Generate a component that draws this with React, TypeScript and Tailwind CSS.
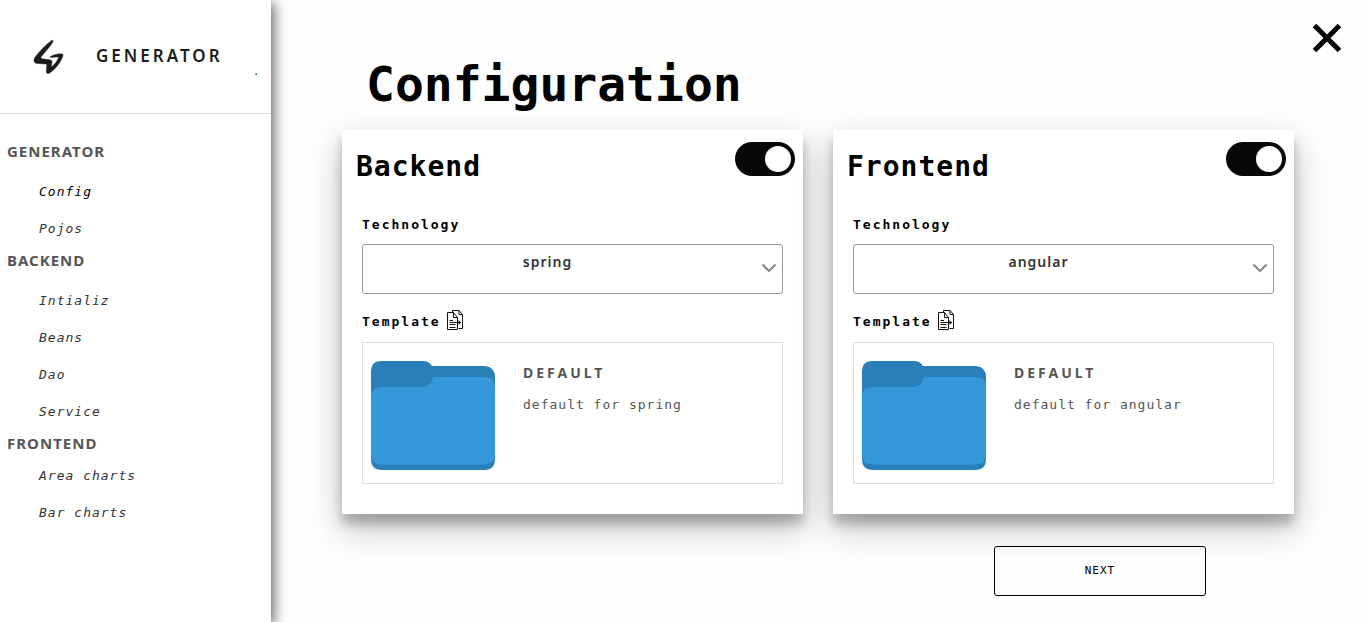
import { useState } from "react";

const navigation = [
  { title: "Generator", items: ["Config", "Pojos"], spaced: true },
  { title: "Backend", items: ["Intializ", "Beans", "Dao", "Service"], spaced: true },
  { title: "Frontend", items: ["Area charts", "Bar charts"], spaced: false },
];

function Logo() {
  return (
    <svg viewBox="0 0 32 36" className="h-9 w-8" fill="#1c1c1c" stroke="#1c1c1c" strokeWidth="0.4" aria-hidden="true">
      <path
        fillRule="evenodd"
        d="M19.6 2.4 C20.4 1.8 21.6 2.7 21 3.7 C17.5 9.5 12.7 14.2 9.5 18.5 C8.6 19.8 8.7 20.6 10.2 20.8 L17.6 21.7 C19.6 22 20.3 23 20 24.6 L19.2 29 C22.5 26.6 25.4 23 26.6 19.2 C24.7 18.8 22 19.2 19 19.6 C18.2 19.7 18 18.6 18.8 18.3 C22 16.7 26 15.6 29.5 15.8 C30.9 15.9 31.3 16.9 30.8 18.2 C28.7 24.6 23.4 31.2 17.8 34.9 C16 36.1 14.2 35.7 14.3 33.5 L14.7 27.5 C14.8 26.6 14.4 26.2 13.6 26.1 L4.9 25.5 C1.9 25.2 1.1 22.2 2.8 19.6 C7.3 13 13.4 7.2 19.6 2.4 Z"
      />
    </svg>
  );
}

function CopyIcon() {
  return (
    <svg viewBox="0 0 16 21" className="h-[21px] w-4" fill="none" stroke="#111" strokeWidth="1" aria-hidden="true">
      <path d="M5.5 2.5 V.5 H12 L15.5 4.5 V18.5 H11.5 M12 .5 V4.5 H15.5" />
      <path d="M.5 2.5 H6.5 L10.5 7.5 V19.5 H.5 Z" fill="#fff" />
      <path d="M6.5 2.5 V7.5 H10.5" />
      <path d="M2.5 10.5 H6 M2.5 12.5 H14 M2.5 14.5 H8.5 M2.5 17.5 H8.5" />
      <path d="M11.5 10 L14 12.5 L11.5 15 Z" fill="#111" stroke="none" />
    </svg>
  );
}

function Folder() {
  return (
    <svg viewBox="0 0 124 109" className="w-31 shrink-0" aria-hidden="true">
      <path
        fill="#2980b9"
        d="M10 0 H52 Q58 0 61 5 H114 Q124 6 124 16 V98 Q124 109 113 109 H11 Q0 109 0 98 V11 Q0 0 10 0 Z"
      />
      <path
        fill="#3498db"
        d="M62 16 H113 Q124 16 124 27 V93 Q124 103.5 113 103.5 H11 Q0 103.5 0 93 V36 Q0 26 11 26 H51 Q61 25 62 16 Z"
      />
    </svg>
  );
}

function Switch({ label }: { label: string }) {
  const [on, setOn] = useState(true);
  return (
    <label className="flex h-[34px] w-15 cursor-pointer items-center rounded-full bg-[#ccc] px-1 has-checked:justify-end has-checked:bg-[#080808]">
      <input
        type="checkbox"
        className="sr-only"
        aria-label={label}
        checked={on}
        onChange={(e) => setOn(e.target.checked)}
      />
      <span className="size-[26px] rounded-full bg-white" />
    </label>
  );
}

function ConfigCard({ title, options }: { title: string; options: string[] }) {
  const [technology, setTechnology] = useState(options[0]);
  const id = `${title}-technology`;
  return (
    <section className="bg-white px-5 pb-[30px] shadow-[0_14px_32px_rgba(0,0,0,0.25),0_10px_10px_rgba(0,0,0,0.22)]">
      <header className="-mx-5 flex items-start justify-between pt-3 pr-2 pl-[14px]">
        <h2 className="pt-[5px] text-[28px] leading-10 font-bold tracking-[1px]">{title}</h2>
        <Switch label={`Enable ${title}`} />
      </header>

      <label htmlFor={id} className="mt-7 block text-[13px] leading-5 font-bold tracking-[2px]">
        Technology
      </label>
      <div className="mt-[9px] grid items-center">
        <select
          id={id}
          value={technology}
          onChange={(e) => setTechnology(e.target.value)}
          className="col-start-1 row-start-1 h-[50px] w-full appearance-none rounded-[3px] border border-[#999] bg-white pr-[50px] pb-[14px] text-center font-['Noto_Sans',sans-serif] text-sm font-semibold tracking-[1px] text-[#333] [text-align-last:center]"
        >
          {options.map((option) => (
            <option key={option}>{option}</option>
          ))}
        </select>
        <svg
          viewBox="0 0 16 10"
          className="pointer-events-none col-start-1 row-start-1 mr-[6px] mb-[2px] h-[10px] w-4 justify-self-end"
          fill="none"
          stroke="#888"
          strokeWidth="2.2"
          aria-hidden="true"
        >
          <path d="M1.5 1.5 L8 8 L14.5 1.5" />
        </svg>
      </div>

      <div className="mt-4 flex h-[21px] items-center gap-[6px]">
        <h3 className="pt-[3px] text-[13px] leading-5 font-bold tracking-[2px]">Template</h3>
        <CopyIcon />
      </div>
      <article className="mt-[11px] flex gap-7 border border-[#ddd] pt-[18px] pr-4 pb-[13px] pl-2">
        <Folder />
        <div className="pt-[2px] text-[#555]">
          <h4 className="font-['Noto_Sans',sans-serif] text-sm leading-5 font-bold tracking-[3px] uppercase">
            Default
          </h4>
          <p className="mt-3 text-[13px] leading-5 tracking-[1px]">default for {technology}</p>
        </div>
      </article>
    </section>
  );
}

export default function App() {
  return (
    <div className="flex min-h-screen bg-[#fefefe] font-['DejaVu_Sans_Mono',monospace] text-black">
      <aside className="z-10 w-[271px] shrink-0 bg-white shadow-[3px_3px_12px_rgba(0,0,0,0.6)]">
        <div className="flex h-[114px] items-center border-b border-[#ddd] pr-3 pb-[2px] pl-8">
          <Logo />
          <span className="ml-8 font-['Noto_Sans',sans-serif] text-[17px] font-semibold tracking-[3px] text-[#1c1c1c]">
            GENERATOR
          </span>
          <a href="#" aria-label="Home" className="mt-8 ml-auto text-[10px] text-[#00f]">
            .
          </a>
        </div>
        <nav className="pt-6">
          {navigation.map(({ title, items, spaced }) => (
            <div key={title}>
              <h2 className="pl-[7px] font-['Noto_Sans',sans-serif] text-[15px] leading-[27px] font-bold tracking-[1px] text-[#555] uppercase">
                {title}
              </h2>
              <ul className={spaced ? "pt-2" : ""}>
                {items.map((item) => (
                  <li key={item}>
                    <a
                      href="#"
                      className={`block pl-[39px] text-[13px] leading-[37px] tracking-[1px] italic ${
                        item === "Config" ? "text-black" : "text-[#333]"
                      }`}
                    >
                      {item}
                    </a>
                  </li>
                ))}
              </ul>
            </div>
          ))}
        </nav>
      </aside>

      <main className="relative min-w-0 grow px-[71px] pt-[52px]">
        <button type="button" aria-label="Close" className="absolute top-[23px] right-[23px]">
          <svg viewBox="0 0 30 30" className="size-[30px]" fill="none" stroke="#000" strokeWidth="5" aria-hidden="true">
            <path d="M2.5 2.5 L27.5 27.5 M27.5 2.5 L2.5 27.5" />
          </svg>
        </button>
        <h1 className="pl-6 text-5xl leading-[64px] font-bold">Configuration</h1>
        <div className="mt-[14px] grid grid-cols-2 gap-[30px]">
          <ConfigCard title="Backend" options={["spring"]} />
          <ConfigCard title="Frontend" options={["angular"]} />
        </div>
        <div className="mt-8 flex justify-end pr-[88px]">
          <button
            type="button"
            className="relative h-[50px] w-[212px] rounded-[3px] border border-black text-[11px] tracking-[1px]"
          >
            NEXT
          </button>
        </div>
      </main>
    </div>
  );
}
